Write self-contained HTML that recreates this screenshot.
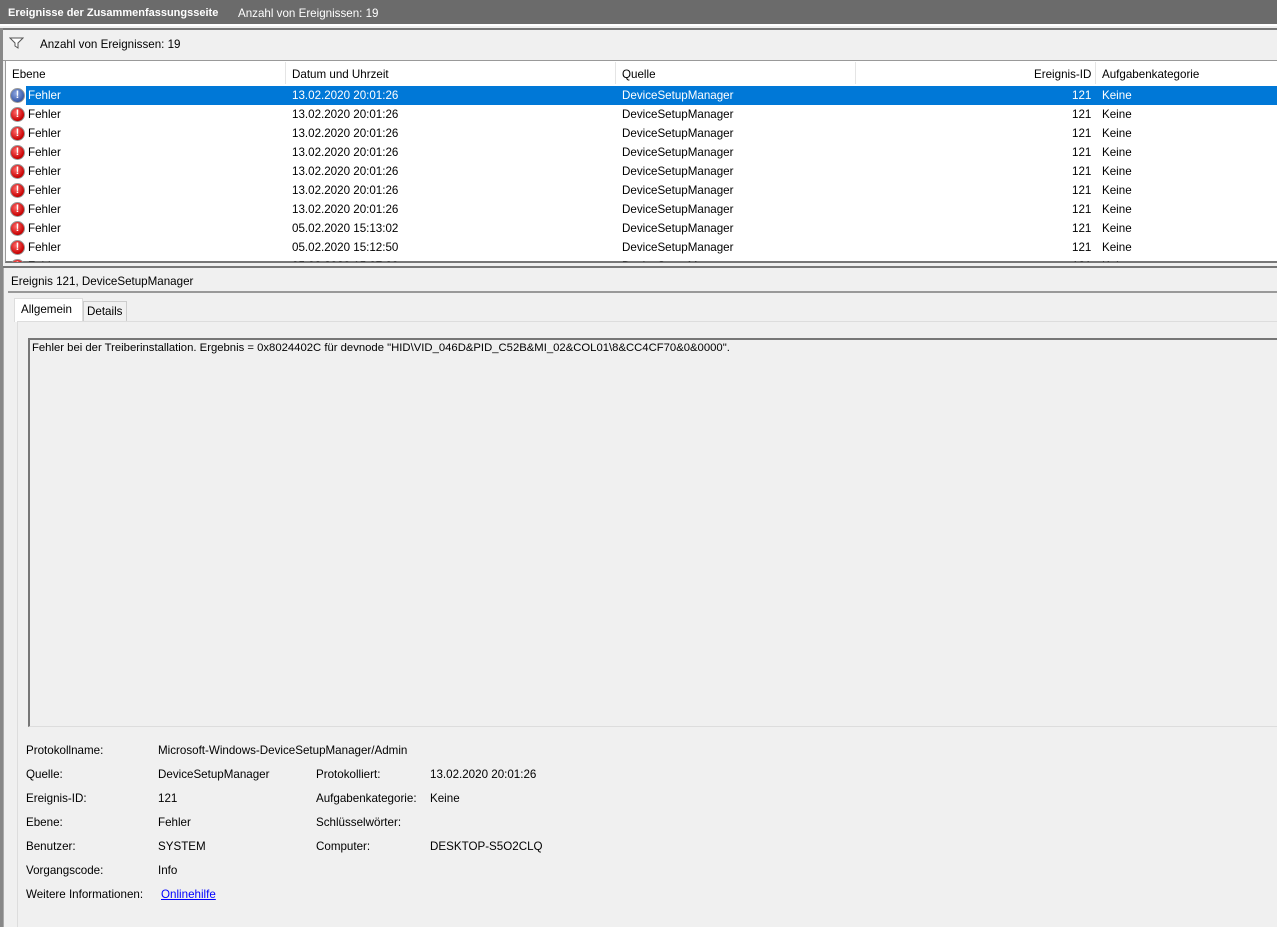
<!DOCTYPE html>
<html><head><meta charset="utf-8"><style>
*{margin:0;padding:0;box-sizing:border-box}
body{width:1277px;height:927px;overflow:hidden;background:#f0f0f0;font-family:"Liberation Sans",sans-serif;font-size:11.6px;color:#000;position:relative}
.a{position:absolute;white-space:nowrap}
.row{position:absolute;left:6px;width:1271px;height:19px}
.row span{position:absolute;top:3px}
.ic{position:absolute;left:4px;top:2px;width:15px;height:15px;border-radius:50%;background:radial-gradient(circle at 40% 35%,#ff6a6a,#c80000 70%,#800 100%);border:1px solid #999;color:#fff;font-weight:bold;font-size:11px;text-align:center;line-height:13px}
.sel{background:#0078d7;color:#fff}
.sel .ic{background:radial-gradient(circle at 40% 35%,#8fa7e0,#3a5aa8 70%,#223 100%)}
</style></head><body>
<div class="a" style="left:0;top:0;width:1277px;height:26px;background:#6b6b6b;border-bottom:2px solid #fff"></div>
<div class="a" style="left:8px;top:7px;color:#fff;font-weight:bold;font-size:11px">Ereignisse der Zusammenfassungsseite</div>
<div class="a" style="left:238px;top:7px;color:#fff">Anzahl von Ereignissen: 19</div>
<div class="a" style="left:0;top:28px;width:1277px;height:2px;background:#777"></div>
<div class="a" style="left:0;top:28px;width:3px;height:899px;background:#888"></div>
<div class="a" style="left:3px;top:30px;width:1274px;height:31px;background:#f0f0f0;border-bottom:1px solid #999"></div>
<svg class="a" style="left:9px;top:37px" width="15" height="12"><path d="M1 1h13l-5 5v5l-3-2V6z" fill="#fff" stroke="#555"/></svg>
<div class="a" style="left:40px;top:38px">Anzahl von Ereignissen: 19</div>
<div class="a" style="left:5px;top:61px;width:1272px;height:202px;background:#fff;border-left:1px solid #999;border-bottom:2px solid #777"></div>
<div class="a" style="left:285px;top:62px;width:1px;height:22px;background:#e5e5e5"></div>
<div class="a" style="left:615px;top:62px;width:1px;height:22px;background:#e5e5e5"></div>
<div class="a" style="left:855px;top:62px;width:1px;height:22px;background:#e5e5e5"></div>
<div class="a" style="left:1095px;top:62px;width:1px;height:22px;background:#e5e5e5"></div>
<div class="a" style="left:12px;top:68px">Ebene</div>
<div class="a" style="left:292px;top:68px">Datum und Uhrzeit</div>
<div class="a" style="left:622px;top:68px">Quelle</div>
<div class="a" style="left:1034px;top:68px">Ereignis-ID</div>
<div class="a" style="left:1102px;top:68px">Aufgabenkategorie</div>
<div class="a" style="left:6px;top:86px;width:1271px;height:176px;overflow:hidden">
<div class="row sel" style="top:0;left:0"><div style="position:absolute;left:0;top:0;width:20px;height:19px;background:#fff"></div><div class="ic">!</div><span style="left:22px">Fehler</span><span style="left:286px">13.02.2020 20:01:26</span><span style="left:616px">DeviceSetupManager</span><span style="left:1066px">121</span><span style="left:1096px">Keine</span></div>
<div class="row" style="top:19px;left:0"><div class="ic">!</div><span style="left:22px">Fehler</span><span style="left:286px">13.02.2020 20:01:26</span><span style="left:616px">DeviceSetupManager</span><span style="left:1066px">121</span><span style="left:1096px">Keine</span></div>
<div class="row" style="top:38px;left:0"><div class="ic">!</div><span style="left:22px">Fehler</span><span style="left:286px">13.02.2020 20:01:26</span><span style="left:616px">DeviceSetupManager</span><span style="left:1066px">121</span><span style="left:1096px">Keine</span></div>
<div class="row" style="top:57px;left:0"><div class="ic">!</div><span style="left:22px">Fehler</span><span style="left:286px">13.02.2020 20:01:26</span><span style="left:616px">DeviceSetupManager</span><span style="left:1066px">121</span><span style="left:1096px">Keine</span></div>
<div class="row" style="top:76px;left:0"><div class="ic">!</div><span style="left:22px">Fehler</span><span style="left:286px">13.02.2020 20:01:26</span><span style="left:616px">DeviceSetupManager</span><span style="left:1066px">121</span><span style="left:1096px">Keine</span></div>
<div class="row" style="top:95px;left:0"><div class="ic">!</div><span style="left:22px">Fehler</span><span style="left:286px">13.02.2020 20:01:26</span><span style="left:616px">DeviceSetupManager</span><span style="left:1066px">121</span><span style="left:1096px">Keine</span></div>
<div class="row" style="top:114px;left:0"><div class="ic">!</div><span style="left:22px">Fehler</span><span style="left:286px">13.02.2020 20:01:26</span><span style="left:616px">DeviceSetupManager</span><span style="left:1066px">121</span><span style="left:1096px">Keine</span></div>
<div class="row" style="top:133px;left:0"><div class="ic">!</div><span style="left:22px">Fehler</span><span style="left:286px">05.02.2020 15:13:02</span><span style="left:616px">DeviceSetupManager</span><span style="left:1066px">121</span><span style="left:1096px">Keine</span></div>
<div class="row" style="top:152px;left:0"><div class="ic">!</div><span style="left:22px">Fehler</span><span style="left:286px">05.02.2020 15:12:50</span><span style="left:616px">DeviceSetupManager</span><span style="left:1066px">121</span><span style="left:1096px">Keine</span></div>
<div class="row" style="top:171px;left:0"><div class="ic">!</div><span style="left:22px">Fehler</span><span style="left:286px">05.02.2020 15:07:00</span><span style="left:616px">DeviceSetupManager</span><span style="left:1066px">121</span><span style="left:1096px">Keine</span></div>
</div>
<div class="a" style="left:3px;top:266px;width:1274px;height:2px;background:#777"></div>
<div class="a" style="left:3px;top:268px;width:1274px;height:659px;border-left:1px solid #aaa"></div>
<div class="a" style="left:11px;top:275px">Ereignis 121, DeviceSetupManager</div>
<div class="a" style="left:8px;top:291px;width:1269px;height:2px;background:#999"></div>
<div class="a" style="left:14px;top:298px;width:69px;height:24px;background:#fff;border:1px solid #ddd;border-bottom:none"></div>
<div class="a" style="left:21px;top:303px">Allgemein</div>
<div class="a" style="left:83px;top:301px;width:44px;height:20px;background:#f0f0f0;border:1px solid #ccc;border-bottom:none"></div>
<div class="a" style="left:87px;top:305px">Details</div>
<div class="a" style="left:17px;top:321px;width:1260px;height:606px;border-left:1px solid #ddd;border-top:1px solid #ddd"></div>
<div class="a" style="left:28px;top:338px;width:1249px;height:389px;border-left:2px solid #777;border-top:2px solid #777;border-bottom:1px solid #ddd"></div>
<div class="a" style="left:32px;top:342px;font-size:11.3px">Fehler bei der Treiberinstallation. Ergebnis = 0x8024402C für devnode "HID\VID_046D&amp;PID_C52B&amp;MI_02&amp;COL01\8&amp;CC4CF70&amp;0&amp;0000".</div>
<div class="a" style="left:26px;top:744px">Protokollname:</div><div class="a" style="left:158px;top:744px">Microsoft-Windows-DeviceSetupManager/Admin</div>
<div class="a" style="left:26px;top:768px">Quelle:</div><div class="a" style="left:158px;top:768px">DeviceSetupManager</div>
<div class="a" style="left:316px;top:768px">Protokolliert:</div><div class="a" style="left:430px;top:768px">13.02.2020 20:01:26</div>
<div class="a" style="left:26px;top:792px">Ereignis-ID:</div><div class="a" style="left:158px;top:792px">121</div>
<div class="a" style="left:316px;top:792px">Aufgabenkategorie:</div><div class="a" style="left:430px;top:792px">Keine</div>
<div class="a" style="left:26px;top:816px">Ebene:</div><div class="a" style="left:158px;top:816px">Fehler</div>
<div class="a" style="left:316px;top:816px">Schlüsselwörter:</div>
<div class="a" style="left:26px;top:840px">Benutzer:</div><div class="a" style="left:158px;top:840px">SYSTEM</div>
<div class="a" style="left:316px;top:840px">Computer:</div><div class="a" style="left:430px;top:840px">DESKTOP-S5O2CLQ</div>
<div class="a" style="left:26px;top:864px">Vorgangscode:</div><div class="a" style="left:158px;top:864px">Info</div>
<div class="a" style="left:26px;top:888px">Weitere Informationen:</div><div class="a" style="left:161px;top:888px;color:#00f;text-decoration:underline">Onlinehilfe</div>
</body></html>
